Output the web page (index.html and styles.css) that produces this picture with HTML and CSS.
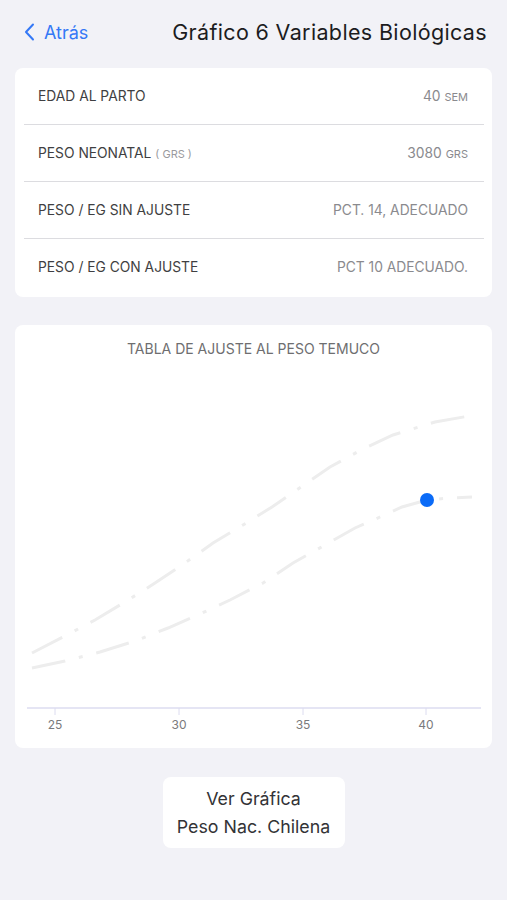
FILE: index.html
```html
<!DOCTYPE html>
<html lang="es">
<head>
<meta charset="utf-8">
<title>Gráfico 6 Variables Biológicas</title>
<link rel="stylesheet" href="styles.css">
</head>
<body>
<header class="nav">
  <a class="back">
    <svg class="chev" width="11" height="18" viewBox="0 0 11 18"><path d="M9 1.5 L2 9 L9 16.5" fill="none" stroke="#3478f6" stroke-width="2" stroke-linecap="round" stroke-linejoin="round"/></svg>
    <span>Atrás</span>
  </a>
  <h1 class="title">Gráfico 6 Variables Biológicas</h1>
</header>

<section class="card list">
  <div class="row">
    <span class="label">EDAD AL PARTO</span>
    <span class="value">40 <small>SEM</small></span>
  </div>
  <div class="row">
    <span class="label">PESO NEONATAL <small class="unit">( GRS )</small></span>
    <span class="value">3080 <small>GRS</small></span>
  </div>
  <div class="row">
    <span class="label">PESO / EG SIN AJUSTE</span>
    <span class="value">PCT. 14, ADECUADO</span>
  </div>
  <div class="row">
    <span class="label">PESO / EG CON AJUSTE</span>
    <span class="value">PCT 10 ADECUADO.</span>
  </div>
</section>

<section class="card chart">
  <div class="chart-title">TABLA DE AJUSTE AL PESO TEMUCO</div>
  <svg class="plot" width="477" height="391" viewBox="0 0 477 391">
    <polyline class="curve" points="17,296 50,279 80,263 110,245 140,226 170,206 198,186 228,168 257,150 286,130 315,110 346,93 378,78 420,65 460,58"/>
    <polyline class="curve" points="17,311 50,304 85,295 120,284 153,271 185,257 215,243 248,226 278,206 310,188 340,171 365,160 387,150 412,143 435,141 457,140"/>
    <line class="axis" x1="12" y1="351" x2="466" y2="351"/>
    <line class="tick" x1="40" y1="351" x2="40" y2="358"/>
    <line class="tick" x1="164" y1="351" x2="164" y2="358"/>
    <line class="tick" x1="288" y1="351" x2="288" y2="358"/>
    <line class="tick" x1="411" y1="351" x2="411" y2="358"/>
    <text class="tl" x="40" y="372">25</text>
    <text class="tl" x="164" y="372">30</text>
    <text class="tl" x="288" y="372">35</text>
    <text class="tl" x="411" y="372">40</text>
    <circle cx="412" cy="143" r="7" fill="#0b6bf7"/>
  </svg>
</section>

<div class="actions">
  <button class="btn">Ver Gráfica<br>Peso Nac. Chilena</button>
</div>
</body>
</html>
```

FILE: styles.css
```css
* { box-sizing: border-box; }
html, body { margin: 0; padding: 0; }
body {
  background: #f2f2f7;
  font-family: Inter, "Liberation Sans", Arial, sans-serif;
  color: #1c1c1e;
  width: 507px;
  height: 900px;
  overflow: hidden;
}
.nav {
  height: 64px;
  display: flex;
  align-items: center;
  justify-content: space-between;
  padding: 0 20px 0 24px;
}
.back {
  display: flex;
  align-items: center;
  gap: 9px;
  color: #3478f6;
  font-size: 18px;
}
.chev { display: block; }
.title {
  margin: 0;
  font-size: 21.5px;
  font-weight: 400;
  color: #1c1c1e;
  letter-spacing: 0.35px;
}
.card {
  background: #fff;
  border-radius: 8px;
  margin: 4px 15px 0;
}
.list { padding-bottom: 2px; }
.row {
  height: 57px;
  margin-left: 9px;
  margin-right: 8px;
  padding: 0 16px 0 14px;
  display: flex;
  align-items: center;
  justify-content: space-between;
  border-bottom: 1px solid #dcdce0;
  font-size: 13.8px;
}
.row:last-child { border-bottom: none; height: 56px; }
.label { color: #3f3f42; }
.value { color: #8a8a8e; }
.row small { font-size: 11px; }
.unit { color: #9a9a9e; }
.chart {
  margin-top: 28px;
  padding-top: 16px;
  height: 423px;
}
.chart-title {
  text-align: center;
  font-size: 14px;
  line-height: 16px;
  color: #6e6e70;
}
.plot { display: block; }
.curve {
  fill: none;
  stroke: #ededed;
  stroke-width: 3;
  stroke-dasharray: 34 14 4 14;
}
.axis { stroke: #dcdcf0; stroke-width: 1.5; }
.tick { stroke: #dcdcf0; stroke-width: 1; }
.tl {
  font-family: Inter, "Liberation Sans", Arial, sans-serif;
  font-size: 12px;
  fill: #7a7a7c;
  text-anchor: middle;
}
.actions {
  display: flex;
  justify-content: center;
  margin-top: 29px;
}
.btn {
  width: 182px;
  height: 71px;
  background: #fff;
  border: none;
  border-radius: 8px;
  font-family: Inter, "Liberation Sans", Arial, sans-serif;
  font-size: 17.8px;
  line-height: 28px;
  color: #333336;
  padding: 0;
}
```
